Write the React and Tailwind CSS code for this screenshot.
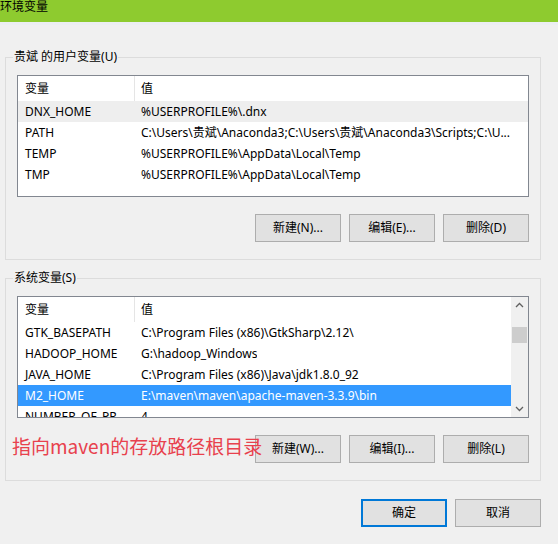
import React from "react";

const FONT = { fontFamily: '"Noto Sans", "Noto Sans CJK SC", sans-serif' };

function Btn({ children, primary }) {
  return (
    <div
      className={
        "flex items-center justify-center h-[28px] text-[12px] text-black bg-[#e1e1e1] " +
        (primary ? "w-[86px] border-2 border-[#0078d7]" : "w-[86px] border border-[#adadad]")
      }
    >
      {children}
    </div>
  );
}

function ListBox({ rows, selected, hover, scroll }) {
  return (
    <div className="ml-[11px] w-[512px] h-[122px] border border-[#828790] bg-white flex overflow-hidden">
      <div className="flex-1 min-w-0 flex flex-col overflow-hidden">
        <div className="flex h-[25px] shrink-0 items-center text-[12px] text-black">
          <div className="w-[117px] h-full pl-[7px] flex items-center border-r border-[#e5e5e5]">变量</div>
          <div className="pl-[6px]">值</div>
        </div>
        {rows.map((r, i) => (
          <div
            key={i}
            className={
              "flex h-[21px] shrink-0 items-center text-[12px] whitespace-nowrap " +
              (i === selected ? "bg-[#3399ff] text-white" : i === hover ? "bg-[#eeeeee] text-black" : "text-black")
            }
          >
            <div className="w-[117px] shrink-0 pl-[7px] overflow-hidden">{r[0]}</div>
            <div className="pl-[6px] overflow-hidden">{r[1]}</div>
          </div>
        ))}
      </div>
      {scroll && (
        <div className="w-[17px] shrink-0 bg-[#f0f0f0] flex flex-col items-center">
          <svg width="17" height="17" viewBox="0 0 17 17" className="shrink-0">
            <path d="M5 10 L8.5 6.5 L12 10" fill="none" stroke="#606060" strokeWidth="1.3" />
          </svg>
          <div className="mt-[13px] w-[15px] h-[16px] bg-[#cdcdcd] shrink-0" />
          <div className="flex-1" />
          <svg width="17" height="17" viewBox="0 0 17 17" className="shrink-0">
            <path d="M5 7 L8.5 10.5 L12 7" fill="none" stroke="#606060" strokeWidth="1.3" />
          </svg>
        </div>
      )}
    </div>
  );
}

function Group({ label, children, className }) {
  return (
    <fieldset className={"ml-[5px] w-[536px] border border-[#dcdcdc] " + (className || "")}>
      <legend className="ml-[7px] px-[1px] text-[12px] leading-[16px] text-black">{label}</legend>
      {children}
    </fieldset>
  );
}

export default function App() {
  const userRows = [
    ["DNX_HOME", "%USERPROFILE%\\.dnx"],
    ["PATH", "C:\\Users\\贵斌\\Anaconda3;C:\\Users\\贵斌\\Anaconda3\\Scripts;C:\\U..."],
    ["TEMP", "%USERPROFILE%\\AppData\\Local\\Temp"],
    ["TMP", "%USERPROFILE%\\AppData\\Local\\Temp"],
  ];
  const sysRows = [
    ["GTK_BASEPATH", "C:\\Program Files (x86)\\GtkSharp\\2.12\\"],
    ["HADOOP_HOME", "G:\\hadoop_Windows"],
    ["JAVA_HOME", "C:\\Program Files (x86)\\Java\\jdk1.8.0_92"],
    ["M2_HOME", "E:\\maven\\maven\\apache-maven-3.3.9\\bin"],
    ["NUMBER_OF_PR", "4"],
  ];
  return (
    <div className="relative w-[558px] h-[544px] bg-[#f0f0f0] overflow-hidden flex flex-col" style={FONT}>
      <div className="h-[22px] shrink-0 bg-[#8ecb2f] text-[12px] leading-[14px] text-black pl-0">环境变量</div>
      <div className="h-[3px] shrink-0 bg-[#eceef2]" />

      <Group label="贵斌 的用户变量(U)" className="mt-[24px] h-[211px] shrink-0">
        <div className="mt-[10px]">
          <ListBox rows={userRows} hover={0} />
        </div>
        <div className="mt-[17px] mr-[11px] flex justify-end gap-[8px]">
          <Btn>新建(N)...</Btn>
          <Btn>编辑(E)...</Btn>
          <Btn>删除(D)</Btn>
        </div>
      </Group>

      <Group label="系统变量(S)" className="mt-[10px] h-[211px] shrink-0">
        <div className="mt-[10px]">
          <ListBox rows={sysRows} selected={3} scroll />
        </div>
        <div className="mt-[17px] mr-[11px] flex justify-end gap-[8px]">
          <Btn>新建(W)...</Btn>
          <Btn>编辑(I)...</Btn>
          <Btn>删除(L)</Btn>
        </div>
      </Group>

      <div className="mt-[18px] mr-[17px] flex justify-end gap-[8px]">
        <Btn primary>确定</Btn>
        <Btn>取消</Btn>
      </div>

      <div
        className="absolute left-[12px] top-[433px] text-[19px] leading-[26px] text-[#e8414d] whitespace-nowrap"
        style={{ fontFamily: '"Noto Sans CJK SC", sans-serif' }}
      >
        指向maven的存放路径根目录
      </div>
    </div>
  );
}
